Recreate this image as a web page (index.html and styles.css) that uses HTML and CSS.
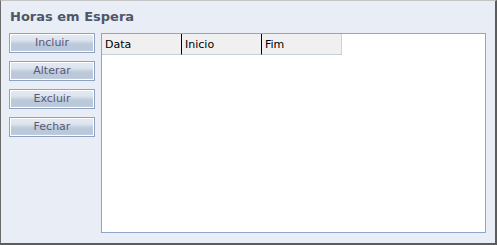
FILE: index.html
```html
<!DOCTYPE html>
<html>
<head>
<meta charset="utf-8">
<link rel="stylesheet" href="styles.css">
</head>
<body>
<div class="window">
  <div class="title">Horas em Espera</div>
  <div class="content">
    <div class="buttons">
      <button class="btn">Incluir</button>
      <button class="btn">Alterar</button>
      <button class="btn">Excluir</button>
      <button class="btn">Fechar</button>
    </div>
    <div class="grid">
      <div class="grid-header">
        <div class="col col-first">Data</div>
        <div class="col">Inicio</div>
        <div class="col col-last">Fim</div>
      </div>
    </div>
  </div>
</div>
</body>
</html>
```

FILE: styles.css
```css
html, body {
  margin: 0;
  padding: 0;
  background: #ffffff;
}

.window {
  width: 497px;
  height: 245px;
  box-sizing: border-box;
  background: #e9eef6;
  border-top: 1px solid #c4c4c4;
  border-left: 1px solid #6a6a6a;
  border-right: 2px solid #5c5c5c;
  border-bottom: 2px solid #5c5c5c;
  padding: 8px 9px 10px 8px;
  display: flex;
  flex-direction: column;
  font-family: "DejaVu Sans", Verdana, sans-serif;
}

.title {
  font-size: 13px;
  font-weight: bold;
  line-height: 16px;
  color: #4f5668;
  padding-left: 1px;
  height: 16px;
  margin-bottom: 8px;
}

.content {
  display: flex;
  flex: 1;
  gap: 6px;
}

.buttons {
  width: 86px;
  display: flex;
  flex-direction: column;
  gap: 8px;
}

.btn {
  height: 20px;
  width: 86px;
  box-sizing: border-box;
  margin: 0;
  padding: 0;
  border: 1px solid #8da3c0;
  box-shadow: inset 0 0 0 1px #ffffff;
  background: linear-gradient(to bottom, #e6ebf2 0%, #dbe3ed 35%, #bccadb 55%, #b9c7d9 85%, #c9d4e2 100%);
  font-family: "DejaVu Sans", Verdana, sans-serif;
  font-size: 11px;
  line-height: 18px;
  color: #5a5878;
  text-align: center;
}

.grid {
  flex: 1;
  box-sizing: border-box;
  border: 1px solid #8ea6c5;
  background: #ffffff;
}

.grid-header {
  display: flex;
  height: 21px;
}

.col {
  width: 80px;
  box-sizing: border-box;
  height: 21px;
  background: #f0f0f0;
  border-left: 1px solid #000000;
  border-bottom: 1px solid #c5cfdc;
  padding-left: 3px;
  font-size: 11px;
  line-height: 22px;
  color: #000000;
}

.col-first {
  width: 79px;
  border-left: none;
}

.col-last {
  width: 81px;
  border-right: 1px solid #c9d2de;
}
```
